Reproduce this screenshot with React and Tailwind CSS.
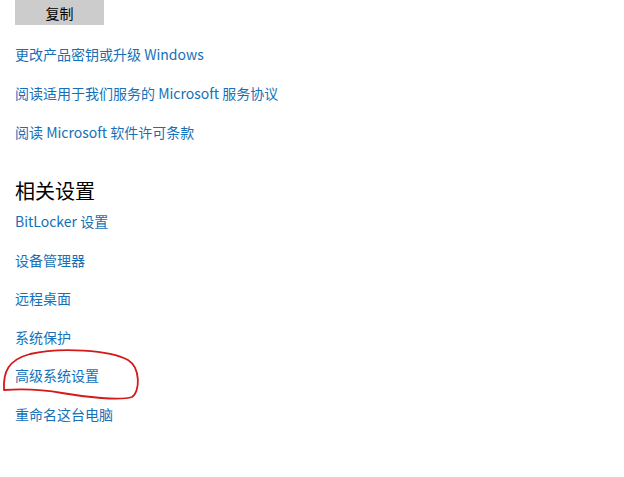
import React from "react";

const font = { fontFamily: '"Noto Sans CJK SC", "Noto Sans", sans-serif' };

function Link({ children }) {
  return (
    <div className="h-[20px] leading-[20px] text-[14px] text-[#1570b8] whitespace-nowrap">
      {children}
    </div>
  );
}

export default function App() {
  return (
    <div className="relative w-[624px] h-[477px] bg-white overflow-hidden" style={font}>
      <div className="flex flex-col pl-[15px]">
        <div className="w-[89px] h-[25px] bg-[#cccccc] flex items-center justify-center text-[14px] text-black leading-none">
          复制
        </div>
        <div className="flex flex-col gap-[19px] mt-[19px]">
          <Link>更改产品密钥或升级 Windows</Link>
          <Link>阅读适用于我们服务的 Microsoft 服务协议</Link>
          <Link>阅读 Microsoft 软件许可条款</Link>
        </div>
        <div className="mt-[35px] h-[28px] leading-[28px] text-[20px] text-black">相关设置</div>
        <div className="flex flex-col gap-[18.6px] mt-[6px]">
          <Link>BitLocker 设置</Link>
          <Link>设备管理器</Link>
          <Link>远程桌面</Link>
          <Link>系统保护</Link>
          <Link>高级系统设置</Link>
          <Link>重命名这台电脑</Link>
        </div>
      </div>
      <svg className="absolute left-0 top-0 pointer-events-none" width="624" height="477">
        <path
          d="M 4 390 C 3 372, 8 360, 30 354 C 60 347, 110 350, 128 360 C 141 368, 140 392, 132 397 C 120 401, 85 397, 62 393 C 40 389, 20 389, 4 390"
          fill="none"
          stroke="#d41a1a"
          strokeWidth="1.8"
          strokeLinecap="round"
        />
      </svg>
    </div>
  );
}
